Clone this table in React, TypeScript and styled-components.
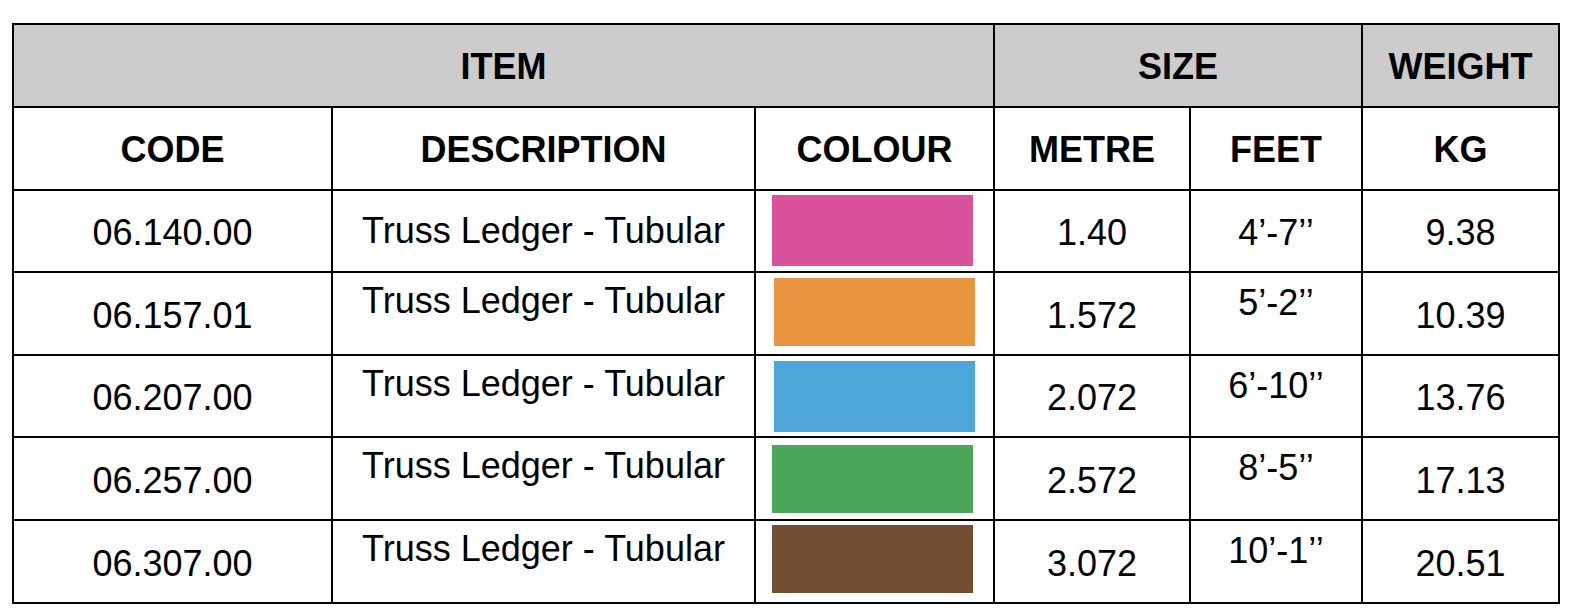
import React from "react";
import styled, { createGlobalStyle } from "styled-components";

const GlobalStyle = createGlobalStyle`
  html, body {
    margin: 0;
    padding: 0;
    background: #ffffff;
  }
  body {
    font-family: "Liberation Sans", Arial, Helvetica, sans-serif;
    color: #000000;
  }
`;

const Page = styled.div`
  padding: 23px 0 0 12px;
`;

const Table = styled.div`
  display: grid;
  grid-template-columns: 317px 421px 237px 194px 170px 195px;
  grid-template-rows: 81px 81px 80px 81px 80px 81px 81px;
  gap: 2px;
  padding: 2px;
  background: #000000;
  width: max-content;
`;

const GroupHead = styled.div<{ $span: number }>`
  grid-column: span ${(p) => p.$span};
  background: #cccccc;
  display: flex;
  align-items: center;
  justify-content: center;
  font-size: 36px;
  font-weight: 700;
  line-height: 40px;
  padding-top: 2px;
  box-sizing: border-box;
`;

const ColHead = styled.div`
  background: #ffffff;
  display: flex;
  align-items: center;
  justify-content: center;
  font-size: 36px;
  font-weight: 700;
  line-height: 40px;
  padding-top: 2px;
  box-sizing: border-box;
`;

const Cell = styled.div<{ $top?: boolean; $offset: number }>`
  background: #ffffff;
  display: flex;
  justify-content: center;
  align-items: ${(p) => (p.$top ? "flex-start" : "center")};
  padding-top: ${(p) => p.$offset}px;
  box-sizing: border-box;
  font-size: 36px;
  line-height: 40px;
  white-space: nowrap;
`;

const SwatchCell = styled.div`
  background: #ffffff;
  display: block;
`;

const Swatch = styled.div<{ $color: string; $x: number; $y: number; $h: number }>`
  width: 201px;
  height: ${(p) => p.$h}px;
  margin: ${(p) => p.$y}px 0 0 ${(p) => p.$x}px;
  background: ${(p) => p.$color};
`;

type Row = {
  code: string;
  metre: string;
  feet: string;
  kg: string;
  color: string;
  sx: number;
  sy: number;
  sh: number;
  first?: boolean;
};

const Q = "\u2019";
const QQ = "\u2019\u2019";

const rows: Row[] = [
  { code: "06.140.00", metre: "1.40", feet: `4${Q}-7${QQ}`, kg: "9.38", color: "#d9529a", sx: 16, sy: 4, sh: 71, first: true },
  { code: "06.157.01", metre: "1.572", feet: `5${Q}-2${QQ}`, kg: "10.39", color: "#e9953f", sx: 18, sy: 5, sh: 68 },
  { code: "06.207.00", metre: "2.072", feet: `6${Q}-10${QQ}`, kg: "13.76", color: "#4da7da", sx: 18, sy: 5, sh: 71 },
  { code: "06.257.00", metre: "2.572", feet: `8${Q}-5${QQ}`, kg: "17.13", color: "#4ca65c", sx: 16, sy: 7, sh: 68 },
  { code: "06.307.00", metre: "3.072", feet: `10${Q}-1${QQ}`, kg: "20.51", color: "#714f30", sx: 16, sy: 4, sh: 68 },
];

export default function App() {
  return (
    <>
      <GlobalStyle />
      <Page>
        <Table>
          <GroupHead $span={3}>ITEM</GroupHead>
          <GroupHead $span={2}>SIZE</GroupHead>
          <GroupHead $span={1}>WEIGHT</GroupHead>

          <ColHead>CODE</ColHead>
          <ColHead>DESCRIPTION</ColHead>
          <ColHead>COLOUR</ColHead>
          <ColHead>METRE</ColHead>
          <ColHead>FEET</ColHead>
          <ColHead>KG</ColHead>

          {rows.map((r) => (
            <React.Fragment key={r.code}>
              <Cell $offset={4}>{r.code}</Cell>
              <Cell $top={!r.first} $offset={r.first ? 0 : 8}>
                Truss Ledger - Tubular
              </Cell>
              <SwatchCell>
                <Swatch $color={r.color} $x={r.sx} $y={r.sy} $h={r.sh} />
              </SwatchCell>
              <Cell $offset={4}>{r.metre}</Cell>
              <Cell $top={!r.first} $offset={r.first ? 4 : 10}>
                {r.feet}
              </Cell>
              <Cell $offset={4}>{r.kg}</Cell>
            </React.Fragment>
          ))}
        </Table>
      </Page>
    </>
  );
}
